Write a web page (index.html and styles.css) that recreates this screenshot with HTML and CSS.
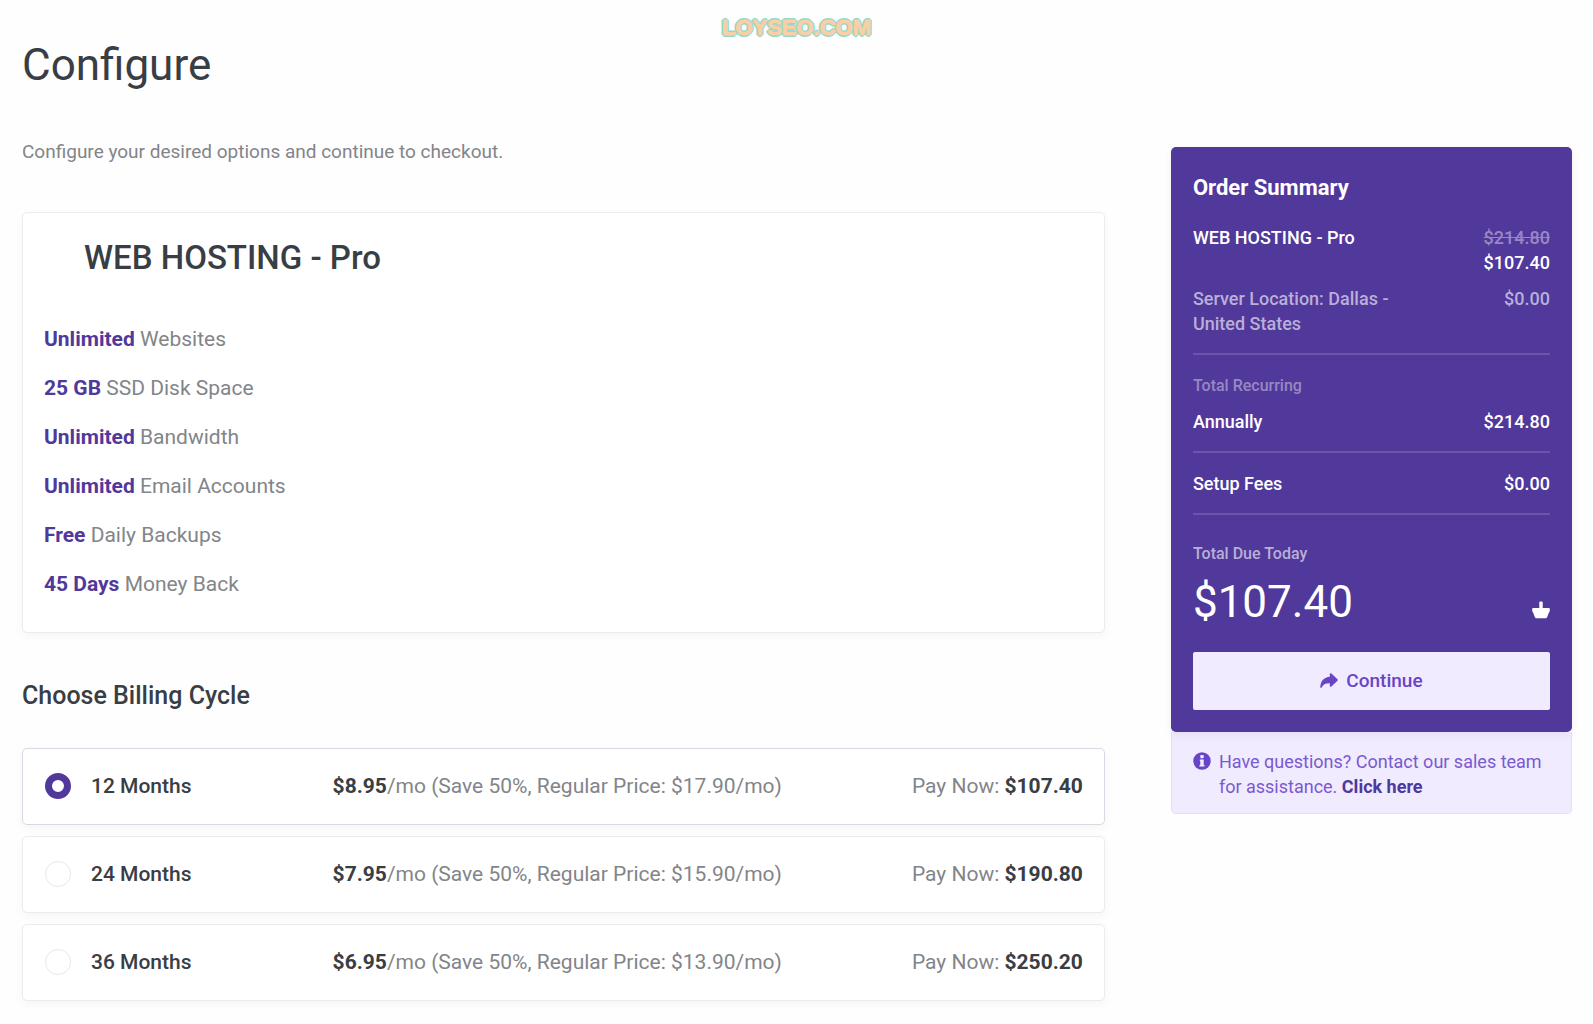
FILE: index.html
```html
<!DOCTYPE html>
<html lang="en">
<head>
<meta charset="utf-8">
<meta name="viewport" content="width=device-width, initial-scale=1">
<title>Configure</title>
<link rel="stylesheet" href="styles.css">
</head>
<body>
<div class="watermark">LOYSEO.COM</div>
<form class="page">
  <main class="main">
    <h1 class="title">Configure</h1>
    <p class="lead">Configure your desired options and continue to checkout.</p>

    <section class="card product">
      <h2 class="product-name">WEB HOSTING - Pro</h2>
      <ul class="features">
        <li><strong>Unlimited</strong> Websites</li>
        <li><strong>25 GB</strong> SSD Disk Space</li>
        <li><strong>Unlimited</strong> Bandwidth</li>
        <li><strong>Unlimited</strong> Email Accounts</li>
        <li><strong>Free</strong> Daily Backups</li>
        <li><strong>45 Days</strong> Money Back</li>
      </ul>
    </section>

    <h3 class="section-title" id="cycle-title">Choose Billing Cycle</h3>
    <div class="cycles" role="radiogroup" aria-labelledby="cycle-title">
      <label class="card cycle">
        <span class="term"><input type="radio" name="cycle" value="12" checked>12 Months</span>
        <span class="price"><strong>$8.95</strong>/mo (Save 50%, Regular Price: $17.90/mo)</span>
        <span class="pay">Pay Now: <strong>$107.40</strong></span>
      </label>
      <label class="card cycle">
        <span class="term"><input type="radio" name="cycle" value="24">24 Months</span>
        <span class="price"><strong>$7.95</strong>/mo (Save 50%, Regular Price: $15.90/mo)</span>
        <span class="pay">Pay Now: <strong>$190.80</strong></span>
      </label>
      <label class="card cycle">
        <span class="term"><input type="radio" name="cycle" value="36">36 Months</span>
        <span class="price"><strong>$6.95</strong>/mo (Save 50%, Regular Price: $13.90/mo)</span>
        <span class="pay">Pay Now: <strong>$250.20</strong></span>
      </label>
    </div>
  </main>

  <aside class="side">
    <section class="summary">
      <h2 class="summary-title">Order Summary</h2>
      <div class="line">
        <span>WEB HOSTING - Pro</span>
        <span class="amount"><s>$214.80</s><br>$107.40</span>
      </div>
      <div class="line line-muted">
        <span class="option">Server Location: Dallas - United States</span>
        <span class="amount">$0.00</span>
      </div>
      <div class="group">
        <p class="caption faint">Total Recurring</p>
        <div class="line"><span>Annually</span><span class="amount">$214.80</span></div>
      </div>
      <div class="group">
        <div class="line"><span>Setup Fees</span><span class="amount">$0.00</span></div>
      </div>
      <div class="group due">
        <p class="caption">Total Due Today</p>
        <div class="total">
          <span>$107.40</span>
          <svg class="basket" viewBox="0 0 18 18" aria-hidden="true"><path d="M7.300 7V1.600A1 1 0 0 1 8.300.6h1.400a1 1 0 0 1 1 1V7h6.200a.9.900 0 0 1 .9.900v2.100c0 .5-.2.700-.6.900l-2 5.200c-.4.900-.9 1.200-1.800 1.200H4.600c-.9 0-1.400-.3-1.800-1.200L.8 10.900c-.4-.2-.6-.4-.6-.9V7.900a.9.900 0 0 1 .9-.9z"/></svg>
        </div>
      </div>
      <button class="continue" type="submit">
        <svg class="arrow" viewBox="0 0 18 16" aria-hidden="true"><path d="M9.800 1.200c0-.9 1-1.300 1.600-.7l6.100 5.800c.4.400.4 1 0 1.400l-6.100 5.800c-.6.600-1.600.2-1.600-.7v-2.500C6 10.200 3.500 11 1.600 14.500c-.4.700-1.300.5-1.300-.3C.5 8.200 4 4.200 9.800 3.800z"/></svg>
        Continue
      </button>
    </section>
    <div class="help">
      <svg class="info" viewBox="0 0 18 18" aria-hidden="true"><circle cx="9" cy="9" r="8.700"/><rect class="hole" x="7.300" y="3" width="3.400" height="3.200" rx=".8"/><path class="hole" d="M6.800 7.400h3.900V13h.8v1.500h-5V13h.8V8.900h-.5z"/></svg>
      <p>Have questions? Contact our sales team for assistance. <a href="#">Click here</a></p>
    </div>
  </aside>
</form>
</body>
</html>
```
FILE: styles.css
```css
* { box-sizing: border-box; }

body {
  margin: 0;
  background: #fefefe;
  color: #828589;
  font-family: Roboto, "Liberation Sans", sans-serif;
  font-size: 19px;
  line-height: 30px;
}

h1, h2, h3, p, ul { margin: 0; padding: 0; }
h2, h3 { font-weight: 500; }
strong { font-weight: 700; }

.watermark {
  position: absolute;
  top: 14px;
  left: 0;
  right: 0;
  text-align: center;
  font: 700 22px/28px "Liberation Sans", Arial, sans-serif;
  color: #f8cfa6;
  -webkit-text-stroke: 1px #f8cfa6;
  text-shadow:
    2px 0 #95d8c8, -2px 0 #95d8c8, 0 2px #95d8c8, 0 -2px #95d8c8,
    1px 1px #95d8c8, -1px 1px #95d8c8, 1px -1px #95d8c8, -1px -1px #95d8c8;
  pointer-events: none;
}

.page {
  display: grid;
  grid-template-columns: minmax(0, 27fr) minmax(0, 10fr);
  column-gap: 66px;
  align-items: start;
  padding: 32px 21px 22px 22px;
}

.title {
  color: #393d44;
  font-size: 44px;
  line-height: 66px;
  font-weight: 400;
}
.lead { margin: 39px 0 45px; }

.card {
  background: #fff;
  border: 1px solid #ebecf0;
  border-radius: 5px;
  box-shadow: 0 3px 10px rgba(0, 0, 0, 0.04);
}

.product { padding: 23px 21px 33px; }
.product-name {
  padding: 0 40px;
  color: #393d44;
  font-size: 33px;
  line-height: 44px;
}
.features {
  margin-top: 44px;
  list-style: none;
  font-size: 21px;
}
.features li { padding-bottom: 19px; }
.features li:last-child { padding-bottom: 0; }
.features strong { color: #51389b; }

.section-title {
  margin: 44px 0 33px;
  color: #393d44;
  font-size: 25px;
  line-height: 38px;
}

.cycles { display: grid; gap: 11px; }
.cycle {
  display: grid;
  grid-template-columns: 5fr 10fr 3fr;
  align-items: center;
  padding: 22px 21px 23px;
  font-size: 21px;
  white-space: nowrap;
}
.cycle:has(:checked) { border-color: #d7dae2; }
.term {
  display: flex;
  align-items: center;
  gap: 20px;
  color: #393d44;
  font-weight: 500;
}
.cycle strong { color: #393d44; }
.pay { justify-self: end; }

.cycle input {
  appearance: none;
  width: 26px;
  height: 26px;
  margin: 0 0 0 1px;
  border: 1px solid #e6e7ea;
  border-radius: 50%;
  background: #fff;
}
.cycle input:checked { border: 7px solid #51389b; }

.side { margin-top: 115px; }
.summary {
  position: relative;
  padding: 26px 22px 22px;
  border-radius: 5px;
  background: #51389b;
  box-shadow: 0 3px 10px rgba(0, 0, 0, 0.06);
  color: #fff;
  font-size: 18px;
  line-height: 25px;
  font-weight: 500;
}
.summary-title {
  margin-bottom: 22px;
  font-size: 22px;
  line-height: 30px;
  font-weight: 700;
}
.line {
  display: flex;
  justify-content: space-between;
  gap: 22px;
}
.line-muted {
  margin-top: 11px;
  color: #b9afd7;
}
.option { max-width: 220px; }
.amount { text-align: right; }
.amount s { color: #9788c3; }

.group {
  margin-top: 17px;
  padding-top: 18px;
  border-top: 2px solid #6b55aa;
}
.caption {
  margin-bottom: 11px;
  color: #b9afd7;
  font-size: 16px;
}
.faint { color: #9788c3; }
.due { padding-top: 26px; }
.due .caption { margin-bottom: 0; }

.total {
  display: flex;
  justify-content: space-between;
  align-items: center;
  font-size: 44px;
  line-height: 73px;
  font-weight: 400;
}
.basket { width: 18px; height: 18px; margin-top: 14px; fill: #fff; }

.continue {
  display: flex;
  justify-content: center;
  align-items: center;
  gap: 8px;
  width: 100%;
  margin-top: 13px;
  padding: 14px;
  border: 0;
  border-radius: 2px;
  background: #f0ebff;
  color: #6844c7;
  font: 500 19px/30px Roboto, "Liberation Sans", sans-serif;
}
.arrow { width: 18px; height: 16px; fill: #6844c7; }

.help {
  display: flex;
  gap: 8px;
  padding: 17px 21px 14px;
  border: 1px solid #e4dcfb;
  border-top: 0;
  border-radius: 0 0 5px 5px;
  background: #f0ebff;
  color: #7a59d0;
  font-size: 18px;
  line-height: 25px;
}
.info { flex: none; width: 18px; height: 18px; margin-top: 3px; fill: #6844c7; }
.info .hole { fill: #f0ebff; }
.help a { color: #51389b; font-weight: 700; text-decoration: none; }
```
